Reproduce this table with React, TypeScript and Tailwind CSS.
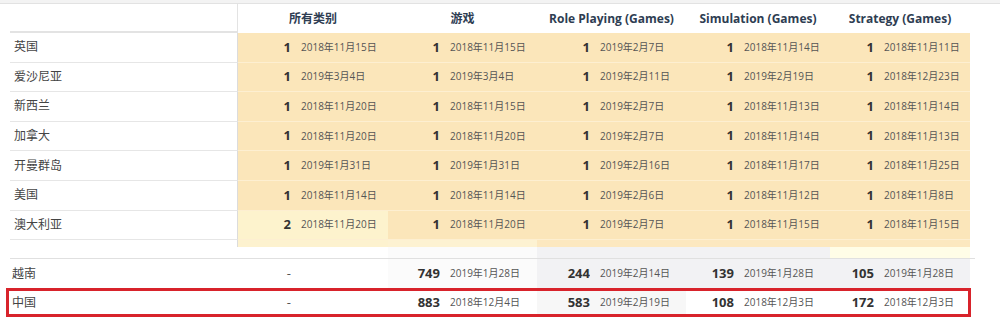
import React from 'react';

type Cell = [string, string];

interface Row {
  name: string;
  cells: Cell[];
}

const headers = ['所有类别', '游戏', 'Role Playing (Games)', 'Simulation (Games)', 'Strategy (Games)'];

const rows: Row[] = [
  { name: '英国', cells: [['1', '2018年11月15日'], ['1', '2018年11月15日'], ['1', '2019年2月7日'], ['1', '2018年11月14日'], ['1', '2018年11月11日']] },
  { name: '爱沙尼亚', cells: [['1', '2019年3月4日'], ['1', '2019年3月4日'], ['1', '2019年2月11日'], ['1', '2019年2月19日'], ['1', '2018年12月23日']] },
  { name: '新西兰', cells: [['1', '2018年11月20日'], ['1', '2018年11月15日'], ['1', '2019年2月7日'], ['1', '2018年11月13日'], ['1', '2018年11月14日']] },
  { name: '加拿大', cells: [['1', '2018年11月20日'], ['1', '2018年11月20日'], ['1', '2019年2月7日'], ['1', '2018年11月14日'], ['1', '2018年11月13日']] },
  { name: '开曼群岛', cells: [['1', '2019年1月31日'], ['1', '2019年1月31日'], ['1', '2019年2月16日'], ['1', '2018年11月17日'], ['1', '2018年11月25日']] },
  { name: '美国', cells: [['1', '2018年11月14日'], ['1', '2018年11月14日'], ['1', '2019年2月6日'], ['1', '2018年11月12日'], ['1', '2018年11月8日']] },
  { name: '澳大利亚', cells: [['2', '2018年11月20日'], ['1', '2018年11月20日'], ['1', '2019年2月7日'], ['1', '2018年11月15日'], ['1', '2018年11月15日']] },
];

const vietnam: Row = { name: '越南', cells: [['-', ''], ['749', '2019年1月28日'], ['244', '2019年2月14日'], ['139', '2019年1月28日'], ['105', '2019年1月28日']] };
const china: Row = { name: '中国', cells: [['-', ''], ['883', '2018年12月4日'], ['583', '2019年2月19日'], ['108', '2018年12月3日'], ['172', '2018年12月3日']] };

const gridCols = 'grid grid-cols-[228px_53px_97px_52px_97px_53px_96px_48px_96px_44px_96px]';

function Num({ value, bg, extra = '' }: { value: string; bg: string; extra?: string }) {
  const weight = value === '-' ? 'font-normal text-[#555]' : 'font-bold text-[#333]';
  return (
    <div className={`flex items-center justify-end text-[13px] ${weight} ${bg} ${extra}`}>{value}</div>
  );
}

function DateCell({ value, bg, extra = '' }: { value: string; bg: string; extra?: string }) {
  return (
    <div className={`flex items-center pl-[10px] text-[10px] text-[#555] whitespace-nowrap ${bg} ${extra}`}>{value}</div>
  );
}

export default function App() {
  return (
    <div className="w-[1000px] h-[322px] bg-white overflow-hidden font-['Open_Sans','Noto_Sans_CJK_SC',sans-serif]">
      <div className="h-[4px] bg-[#f3f3f3] border-b border-[#e2e2e2]" />

      <div className="pl-[10px]">
        {/* header */}
        <div className="grid grid-cols-[228px_150px_149px_149px_144px_140px] h-[29px]">
          <div className="border-b-2 border-r border-[#e3e3e3]" />
          {headers.map((h) => (
            <div key={h} className="flex items-center justify-center text-[12px] font-bold text-[#2e3d52] whitespace-nowrap">
              {h}
            </div>
          ))}
        </div>

        {/* yellow heat rows */}
        {rows.map((row) => (
          <div key={row.name} className={`${gridCols} h-[29.6px]`}>
            <div className="flex items-center pl-[4px] text-[12px] text-[#444] border-b border-r border-b-[#e6e6e6] border-r-[#dcdcdc]">
              {row.name}
            </div>
            {row.cells.map(([n, d], i) => {
              const bg = row.name === '澳大利亚' && i === 0 ? 'bg-[#fdf3cd]' : 'bg-[#fbe6ba]';
              return (
                <React.Fragment key={i}>
                  <Num value={n} bg={bg} extra="border-b border-[#fdefd1]" />
                  <DateCell value={d} bg={bg} extra="border-b border-[#fdefd1]" />
                </React.Fragment>
              );
            })}
          </div>
        ))}

        {/* partial row peeking under the list */}
        <div className="grid grid-cols-[228px_150px_149px_149px_144px_140px] h-[7px]">
          <div className="border-r border-[#dcdcdc]" />
          <div className="bg-[#fdf2cf]" />
          <div className="bg-[#fdf2d2]" />
          <div className="bg-[#fce8c0]" />
          <div className="bg-[#fce8c0]" />
          <div className="bg-[#fce8c0]" />
        </div>
        <div className="grid grid-cols-[228px_150px_149px_149px_144px_140px] h-[11px]">
          <div />
          <div className="bg-white" />
          <div className="bg-[#fbfbfb]" />
          <div className="bg-[#f2f2f4]" />
          <div className="bg-[#f2f2f4]" />
          <div className="bg-[#fffde7]" />
        </div>
      </div>

      {/* totals */}
      <div className="ml-[10px] w-[965px] border-t border-[#e0e0e0]">
        <div className={`${gridCols} h-[29px]`}>
          <div className="flex items-center pl-[2px] text-[12px] text-[#444]">{vietnam.name}</div>
          {vietnam.cells.map(([n, d], i) => {
            const bg = i === 0 ? 'bg-white' : i === 1 ? 'bg-[#fbfbfb]' : 'bg-[#f2f2f4]';
            return (
              <React.Fragment key={i}>
                <Num value={n} bg={bg} />
                <DateCell value={d} bg={bg} />
              </React.Fragment>
            );
          })}
        </div>
      </div>

      <div className="ml-[6px] w-[965px] h-[29px] border-[3px] border-[#d8232b]">
        <div className="grid grid-cols-[229px_53px_97px_52px_97px_53px_96px_48px_96px_44px_93px] h-full">
          <div className="flex items-center pl-[3px] text-[12px] text-[#444]">{china.name}</div>
          {china.cells.map(([n, d], i) => {
            const bg = i === 2 ? 'bg-[#f7f7f7]' : 'bg-white';
            return (
              <React.Fragment key={i}>
                <Num value={n} bg={bg} />
                <DateCell value={d} bg={bg} />
              </React.Fragment>
            );
          })}
        </div>
      </div>
    </div>
  );
}
